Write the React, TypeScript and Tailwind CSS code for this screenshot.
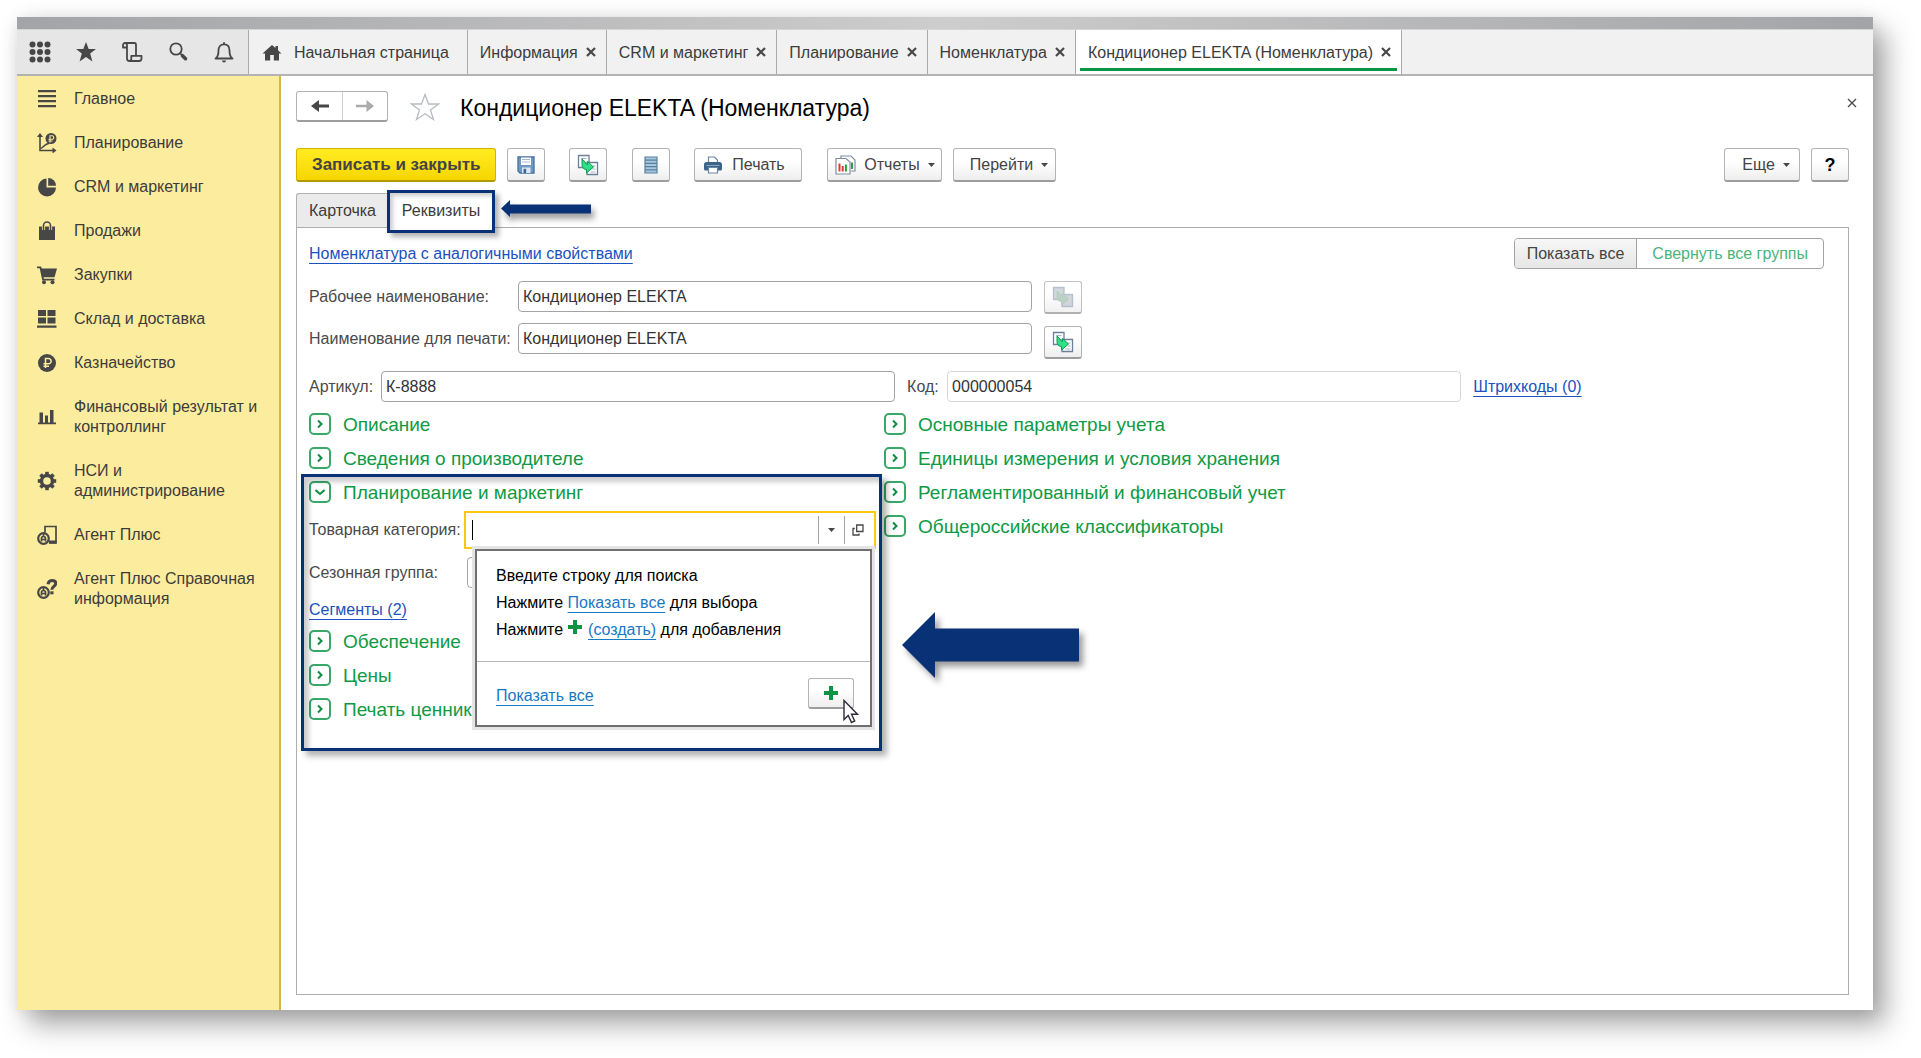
import type { ReactNode } from "react";

const INK = "#474747";

/* ---------- Icons ---------- */

const GridIcon = () => (
  <svg width="22" height="22" viewBox="0 0 22 22" fill={INK}>
    {[3.5, 11, 18.5].map((y) => [3.5, 11, 18.5].map((x) => <circle key={`${x}-${y}`} cx={x} cy={y} r="3" />))}
  </svg>
);

const StarIcon = () => (
  <svg width="22" height="22" viewBox="0 0 22 22" fill={INK}>
    <path d="M11 1l2.700 7H21l-5.800 4.500L17.400 20.500 11 16l-6.400 4.500L6.800 12.500 1 8h7.300z" />
  </svg>
);

const ScrollIcon = () => (
  <svg width="22" height="22" viewBox="0 0 22 22" fill="none" stroke={INK} strokeWidth="1.800" strokeLinejoin="round">
    <path d="M6 6.500H2V4a2 2 0 0 1 2-2h9.500c1.400 0 1.500 1 1.500 2v10.500M4 2c1.500 0 2 .8 2 2v13.500C6 19 7 20 8.500 20H18c1.500 0 2.500-1 2.500-2.500v-2.700H10.300v2.700c0 1.500-.5 2.500-1.800 2.500" />
  </svg>
);

const SearchIcon = () => (
  <svg width="22" height="22" viewBox="0 0 22 22" fill="none" stroke={INK}>
    <circle cx="9" cy="8" r="5.700" strokeWidth="1.800" />
    <path d="M13.300 12.400l1.700 1.700" strokeWidth="1.800" />
    <path d="M15.500 14.700l3 3" strokeWidth="3.500" strokeLinecap="round" />
  </svg>
);

const BellIcon = () => (
  <svg width="22" height="22" viewBox="0 0 22 22" fill="none" stroke={INK} strokeWidth="1.800" strokeLinejoin="round">
    <path d="M2.500 17.500c2.500-1.500 3-3.500 3-8 0-3.700 2-6.200 5.500-6.200s5.500 2.500 5.500 6.200c0 4.500.5 6.500 3 8z" />
    <path d="M11 3.200V1.200" />
    <path d="M9 19.500a2 2 0 0 0 4 0z" fill={INK} stroke="none" />
  </svg>
);

const HomeIcon = () => (
  <svg width="20" height="18" viewBox="0 0 20 18" fill={INK}>
    <path d="M10 1L0.500 9.500H3V16.500H8.200V11h3.600v5.500H17V9.500h2.500L16 6.300V2h-2.500v2.100z" />
  </svg>
);

const CrossIcon = ({ thin = false }: { thin?: boolean }) => (
  <svg width="10" height="10" viewBox="0 0 10 10" stroke={INK} strokeWidth={thin ? 1.3 : 2.2}>
    <path d="M1 1l8 8M9 1L1 9" />
  </svg>
);

const CaretIcon = () => (
  <svg width="7" height="4" viewBox="0 0 7 4" fill={INK}>
    <path d="M0 0h7L3.500 4z" />
  </svg>
);

const Ruble = ({ x, y, color }: { x: number; y: number; color: string }) => (
  <path transform={`translate(${x} ${y})`} d="M-1.500 5V-4.500H1.500a2.600 2.600 0 0 1 0 5.300H-3.500M-3.500 3.200H2" fill="none" stroke={color} strokeWidth="1.500" />
);

const SideSvg = ({ children }: { children: ReactNode }) => (
  <svg width="20" height="20" viewBox="0 0 20 20" fill={INK}>
    {children}
  </svg>
);

const YELLOW = "#fcec9d";

const icons = {
  main: (
    <SideSvg>
      <path d="M1 1h18v2.200H1zM1 6h18v2.200H1zM1 11h18v2.200H1zM1 16h18v2.200H1z" />
    </SideSvg>
  ),
  plan: (
    <SideSvg>
      <path d="M3 3v14.500h13" fill="none" stroke={INK} strokeWidth="1.600" />
      <path d="M3 0L6 4H0zM15.500 14.500V20.500L19.500 17.500z" />
      <path d="M4 15.500l5-4 3-1.200" fill="none" stroke={INK} strokeWidth="1.500" />
      <circle cx="14" cy="5.500" r="5.500" />
      <path d="M13 9.500V2.700h2a1.700 1.700 0 0 1 0 3.600h-3.500M11.500 8h4" fill="none" stroke={YELLOW} strokeWidth="1.100" />
    </SideSvg>
  ),
  crm: (
    <SideSvg>
      <path d="M9.500 1.500V10.500h9.500A9 9 0 1 1 9.500 1.500z" />
      <path d="M11.200 1v7.800H19A8 8 0 0 0 11.200 1z" />
    </SideSvg>
  ),
  sales: (
    <SideSvg>
      <path d="M2 5.500h16v13.500H2z" />
      <path d="M6.500 9V5a3.500 3.500 0 0 1 7 0v4" fill="none" stroke={YELLOW} strokeWidth="3.200" />
      <path d="M6.500 9V4.500a3.500 3.500 0 0 1 7 0V9" fill="none" stroke={INK} strokeWidth="1.600" />
    </SideSvg>
  ),
  purchases: (
    <SideSvg>
      <path d="M0 1.500h4l.8 2H20l-2.500 8.700H6.500l.4 1.600H17.500v1.700H5.300L2.700 3.200H0z" />
      <circle cx="7" cy="17.200" r="2" />
      <circle cx="15.500" cy="17.200" r="2" />
    </SideSvg>
  ),
  stock: (
    <SideSvg>
      <path d="M1 1h8v6H1zM10.500 1h8v6h-8zM1 8.500h8v6H1zM10.500 8.500h8v6h-8zM0 16.500h19.500v2.200H0z" />
    </SideSvg>
  ),
  treasury: (
    <SideSvg>
      <circle cx="10" cy="10" r="9" />
      <Ruble x={10} y={10} color={YELLOW} />
    </SideSvg>
  ),
  finance: (
    <SideSvg>
      <path d="M2.500 5.500h3.500v10H2.500zM8 8.500h3v7H8zM13 3h3.500v12.500H13zM1 15.500h18v1.800H1z" />
    </SideSvg>
  ),
  admin: (
    <SideSvg>
      <circle cx="10" cy="10" r="5.500" fill="none" stroke={INK} strokeWidth="3.400" />
      {[0, 45, 90, 135, 180, 225, 270, 315].map((a) => (
        <path key={a} transform={`rotate(${a} 10 10)`} d="M8.200 .8h3.600v3.700H8.200z" />
      ))}
    </SideSvg>
  ),
  agent: (
    <SideSvg>
      <path d="M8 7.500V1.500h11v16.300h-7" fill="none" stroke={INK} strokeWidth="1.700" />
      <path d="M12 15.500h7.500v3H12z" />
      <circle cx="6.500" cy="13.500" r="5.300" fill={YELLOW} stroke={INK} strokeWidth="2.200" />
      <path d="M4.500 16.500v-3a2 2 0 0 1 4 0v3M4.500 14.500h4M6.500 9v2" fill="none" stroke={INK} strokeWidth="1.700" />
    </SideSvg>
  ),
  agentInfo: (
    <SideSvg>
      <path d="M11 5.200C11.500 2.300 13.300 1.500 15.300 1.500c2 0 3.400 1.200 3.400 3 0 2.700-3.900 3-3.900 6.200" fill="none" stroke={INK} strokeWidth="3" />
      <path d="M13.300 12.300h3.200v3h-3.200z" />
      <circle cx="6.500" cy="13.500" r="5.300" fill={YELLOW} stroke={INK} strokeWidth="2.200" />
      <path d="M4.500 16.500v-3a2 2 0 0 1 4 0v3M4.500 14.500h4M6.500 9v2" fill="none" stroke={INK} strokeWidth="1.700" />
    </SideSvg>
  ),
};

const FloppyIcon = () => (
  <svg width="18" height="18" viewBox="0 0 18 18">
    <path d="M1 1h16v16H3l-2-2z" fill="#6f9ac4" stroke="#44709b" strokeWidth="1.300" />
    <path d="M4 1.500h10v7.500H4z" fill="#fff" />
    <path d="M5 3.500h8M5 6h8" stroke="#a5bdd3" strokeWidth="1.100" />
    <path d="M5 11.500h8.500V17H5z" fill="#dde8f2" />
    <path d="M6.500 12.800h2.700V17H6.500z" fill="#3d6a95" />
  </svg>
);

const TransferIcon = ({ muted = false }: { muted?: boolean }) => (
  <svg width="22" height="22" viewBox="0 0 22 22" className={muted ? "opacity-60" : ""}>
    <path d="M1.500 1.500h10.500v12H1.500z" fill={muted ? "#a3adba" : "#fff"} stroke="#6b7f98" strokeWidth="1.300" />
    <path d="M10 8.500h10.500v12H10z" fill={muted ? "#a3adba" : "#fff"} stroke="#6b7f98" strokeWidth="1.300" />
    <path d="M4 4.500h5.500M15.500 12h3M15.500 15h3M13.500 18h5" stroke="#a7b4c4" />
    <path d="M5 5v5.500c0 3.500 1.800 4.800 4.500 5v3.500l7-6-6-5.500v3c-1.300 0-2-.7-2.300-2.500z" fill={muted ? "#76a48b" : "#2fe089"} stroke={muted ? "#6d9a82" : "#0f9a50"} strokeWidth="1" />
  </svg>
);

const ListIcon = () => (
  <svg width="14" height="18" viewBox="0 0 14 18">
    <path d="M1 1h12v16H1z" fill="#a9c6dc" stroke="#56809f" strokeWidth="1.200" />
    <path d="M1 4.200h12M1 7.400h12M1 10.600h12M1 13.800h12" stroke="#56809f" strokeWidth="1.200" />
  </svg>
);

const PrinterIcon = () => (
  <svg width="18" height="18" viewBox="0 0 18 18">
    <path d="M4.500 7V1h6l3 3v3" fill="#fff" stroke="#6b86a3" strokeWidth="1.200" />
    <path d="M2.500 6h13A2.500 2.500 0 0 1 18 8.500V13a1.500 1.500 0 0 1-1.500 1.500h-15A1.500 1.500 0 0 1 0 13V8.500A2.500 2.500 0 0 1 2.500 6z" fill="#3c6489" />
    <path d="M2.500 9.500h13" stroke="#87a9c6" />
    <path d="M4.500 11.500h9V17h-9z" fill="#fff" stroke="#6b86a3" strokeWidth="1.200" />
  </svg>
);

const ReportIcon = () => (
  <svg width="21" height="20" viewBox="0 0 21 20" fill="none">
    <path d="M6 3V1h10l4 4v11h-4" fill="#fff" stroke="#7f8ea1" strokeWidth="1.200" />
    <path d="M1 3.500h10l4 3.500v12H1z" fill="#fff" stroke="#7f8ea1" strokeWidth="1.200" />
    <path d="M4.500 16.500V8.500" stroke="#e23b2e" strokeWidth="2" />
    <path d="M7.700 16.500V11" stroke="#e23b2e" strokeWidth="2" />
    <path d="M10.900 16.500V9.500M17 7.500V14" stroke="#2f9a45" strokeWidth="2" />
  </svg>
);

const PlusIcon = () => (
  <svg width="14" height="14" viewBox="0 0 14 14" stroke="#0b9444" strokeWidth="4">
    <path d="M7 0v14M0 7h14" />
  </svg>
);

const OpenIcon = () => (
  <svg width="12" height="12" viewBox="0 0 12 12" fill="none" stroke={INK} strokeWidth="1.300">
    <path d="M4.700 1h6.300v6.500H4.700z" />
    <path d="M2.800 4.500H1v6.500h6V9.500" />
  </svg>
);

/* ---------- Building blocks ---------- */

const buttonLook =
  "flex items-center justify-center rounded-[3px] border border-b-2 border-[#b4b4b4] border-b-[#9d9d9d] bg-gradient-to-b from-white from-40% to-[#eeeeee] text-[#444444]";

function ToolButton({ label, className, children }: { label?: string; className: string; children: ReactNode }) {
  return (
    <button type="button" aria-label={label} className={`${buttonLook} h-[34px] ${className}`}>
      {children}
    </button>
  );
}

function Group({ title, open = false }: { title: string; open?: boolean }) {
  return (
    <button type="button" aria-expanded={open} className="flex h-[34px] items-center gap-3 text-left text-[19px] text-[#0f9a45]">
      <span className="flex size-[22px] shrink-0 items-center justify-center rounded-[5px] border-2 border-[#38a869]">
        <svg width="10" height="10" viewBox="0 0 10 10" fill="none" stroke="#0b8f41" strokeWidth="2">
          <path d={open ? "M0.500 3l4.500 4 4.500-4" : "M3 1.500l3.500 3.500-3.500 3.500"} />
        </svg>
      </span>
      <span className="pt-[2px] whitespace-nowrap">{title}</span>
    </button>
  );
}

function Tab({ title, active = false }: { title: string; active?: boolean }) {
  return (
    <div className={`relative flex items-center gap-2 border-r border-[#aaaaaa] pr-[10px] pl-3 ${active ? "bg-white" : "bg-[#f1f1f1]"}`}>
      <button type="button" className="pt-[2px] whitespace-nowrap">
        {title}
      </button>
      <button type="button" aria-label={`Закрыть: ${title}`}>
        <CrossIcon />
      </button>
      {active && <span className="absolute right-1 bottom-[3px] left-1 h-[3px] bg-[#0b9444]" />}
    </div>
  );
}

const sections: { title: string; icon: ReactNode }[] = [
  { title: "Главное", icon: icons.main },
  { title: "Планирование", icon: icons.plan },
  { title: "CRM и маркетинг", icon: icons.crm },
  { title: "Продажи", icon: icons.sales },
  { title: "Закупки", icon: icons.purchases },
  { title: "Склад и доставка", icon: icons.stock },
  { title: "Казначейство", icon: icons.treasury },
  { title: "Финансовый результат и контроллинг", icon: icons.finance },
  { title: "НСИ и администрирование", icon: icons.admin },
  { title: "Агент Плюс", icon: icons.agent },
  { title: "Агент Плюс Справочная информация", icon: icons.agentInfo },
];

const quickActions = [
  { label: "Меню функций", icon: <GridIcon /> },
  { label: "Избранное", icon: <StarIcon /> },
  { label: "История", icon: <ScrollIcon /> },
  { label: "Поиск", icon: <SearchIcon /> },
  { label: "Оповещения", icon: <BellIcon /> },
];

function TopBar() {
  return (
    <header className="flex h-[47px] border-t border-b-2 border-t-[#d5d5d5] border-b-[#b3b3b3] bg-[#f1f1f1] text-[#3c3c3c]">
      <div className="flex border-r border-[#aaaaaa] bg-[#e6e6e6] pr-px">
        {quickActions.map((a) => (
          <button key={a.label} type="button" aria-label={a.label} className="flex w-[46px] items-center justify-center">
            {a.icon}
          </button>
        ))}
      </div>
      <button type="button" className="flex items-center gap-3 border-r border-[#aaaaaa] pt-[2px] pr-[18px] pl-[13px] whitespace-nowrap">
        <HomeIcon />
        Начальная страница
      </button>
      <Tab title="Информация" />
      <Tab title="CRM и маркетинг" />
      <Tab title="Планирование" />
      <Tab title="Номенклатура" />
      <Tab title="Кондиционер ELEKTA (Номенклатура)" active />
    </header>
  );
}

function Sidebar() {
  return (
    <nav className="flex w-[264px] shrink-0 flex-col gap-6 border-r-2 border-[#d2b94b] bg-[#fcec9d] pt-[13px] pr-4 pl-5 text-[#3c3c3c]">
      {sections.map((s) => (
        <a key={s.title} href="#" className="flex items-center gap-[17px] leading-5">
          <span className="shrink-0">{s.icon}</span>
          {s.title}
        </a>
      ))}
    </nav>
  );
}

function TitleRow() {
  return (
    <div className="flex items-center">
      <div className="flex h-[31px] rounded-[3px] border border-b-2 border-[#b4b4b4] border-b-[#9d9d9d]">
        <button type="button" aria-label="Назад" className="flex w-[46px] items-center justify-center border-r border-[#d0d0d0]">
          <svg width="18" height="12" viewBox="0 0 18 12" fill={INK}>
            <path d="M8 0v4.500h10v3H8V12L0 6z" />
          </svg>
        </button>
        <button type="button" aria-label="Вперед" className="flex w-11 items-center justify-center">
          <svg width="18" height="12" viewBox="0 0 18 12" fill="#ababab">
            <path d="M10.500 0v4.800H0v2.400h10.500V12L18 6z" />
          </svg>
        </button>
      </div>
      <button type="button" aria-label="В избранное" className="ml-[22px]">
        <svg width="30" height="28" viewBox="0 0 30 28" fill="none" stroke="#b7bcc2" strokeWidth="1.300">
          <path d="M15 1.500l3.500 9.500H28.500l-8 6 3 9.500L15 20.800 6.500 26.500l3-9.500-8-6H11.500z" />
        </svg>
      </button>
      <h1 className="ml-5 pt-[2px] text-[23px] leading-7 text-black">Кондиционер ELEKTA (Номенклатура)</h1>
      <button type="button" aria-label="Закрыть форму" className="-mr-3 mb-2 ml-auto p-1">
        <CrossIcon thin />
      </button>
    </div>
  );
}

function Toolbar() {
  return (
    <div className="mt-[26px] flex items-center">
      <button
        type="button"
        className="h-[34px] rounded-[3px] border border-b-2 border-[#d1b400] border-b-[#b39a00] bg-gradient-to-b from-[#ffec1f] to-[#f7d600] px-[15px] text-[17px] font-bold whitespace-nowrap text-[#444444]"
      >
        Записать и закрыть
      </button>
      <ToolButton label="Записать" className="ml-[11px] w-[38px]">
        <FloppyIcon />
      </ToolButton>
      <ToolButton label="Создать на основании" className="ml-6 w-[38px]">
        <TransferIcon />
      </ToolButton>
      <ToolButton label="Список" className="ml-[25px] w-[38px]">
        <ListIcon />
      </ToolButton>
      <ToolButton className="ml-6 w-[108px] gap-[10px] pr-2">
        <PrinterIcon />
        Печать
      </ToolButton>
      <ToolButton className="ml-[25px] w-[115px] gap-2">
        <ReportIcon />
        Отчеты
        <CaretIcon />
      </ToolButton>
      <ToolButton className="ml-[11px] w-[103px] gap-2 pl-2">
        Перейти
        <CaretIcon />
      </ToolButton>
      <ToolButton className="ml-auto w-[76px] gap-2 pl-2">
        Еще
        <CaretIcon />
      </ToolButton>
      <ToolButton label="Справка" className="ml-[11px] w-[38px]">
        <span className="text-lg font-bold text-black">?</span>
      </ToolButton>
    </div>
  );
}

function PageTabs() {
  return (
    <div role="tablist" className="mt-[11px] flex h-[34px] text-[#3c3c3c]">
      <button type="button" role="tab" aria-selected="false" className="w-[92px] rounded-tl-[3px] border-t border-l border-[#b0b0b0] bg-[#ebebeb]">
        Карточка
      </button>
      <div className="relative z-10 -mb-px flex w-[106px] bg-white">
        <button type="button" role="tab" aria-selected="true" className="flex-1">
          Реквизиты
        </button>
        <span className="pointer-events-none absolute -inset-x-px -top-[3px] -bottom-[5px] border-[3px] border-[#093276] shadow-[4px_4px_5px_rgba(0,0,0,0.3),inset_3px_3px_4px_rgba(0,0,0,0.2)]" />
        <svg width="98" height="30" viewBox="0 0 98 30" className="pointer-events-none absolute top-[3px] left-[112px] drop-shadow-[3px_5px_3px_rgba(0,0,0,0.4)]">
          <path d="M1 12.500L10 4v4.500H91v9H10V21z" fill="#093276" />
        </svg>
      </div>
    </div>
  );
}

const inputLook = "h-[31px] min-w-0 flex-1 rounded-[4px] border border-[#a3a3a3] bg-white px-1 text-[#333333] outline-none";

function LookupPopup() {
  return (
    <div className="absolute top-full right-[2px] left-[9px] z-20 mt-[2px] border-2 border-[#707070] bg-white text-black shadow-[0_0_0_3px_#e4e4e4]">
      <div className="border-b border-[#b8b8b8] px-[19px] pt-[11px] pb-[18px] leading-[27px] whitespace-nowrap">
        <p>Введите строку для поиска</p>
        <p>
          Нажмите{" "}
          <a href="#" className="text-[#1778c4] underline underline-offset-4">
            Показать все
          </a>{" "}
          для выбора
        </p>
        <p>
          Нажмите{" "}
          <span className="mr-[2px] inline-block align-[1px]">
            <PlusIcon />
          </span>{" "}
          <a href="#" className="text-[#1778c4] underline underline-offset-4">
            (создать)
          </a>{" "}
          для добавления
        </p>
      </div>
      <div className="flex h-[63px] items-center justify-between pr-4 pl-[19px]">
        <a href="#" className="mt-1 text-[#1778c4] underline underline-offset-4">
          Показать все
        </a>
        <button type="button" aria-label="Создать" className={`${buttonLook} relative h-[31px] w-[46px]`}>
          <PlusIcon />
          <svg width="17" height="25" viewBox="0 0 17 25" className="absolute top-5 left-[34px]" fill="#fff" stroke="#2c2c3a" strokeWidth="1.400">
            <path d="M1 1.500V20.500l4.200-4 3.300 7 3.200-1.500-3.200-6.800h6z" />
          </svg>
        </button>
      </div>
    </div>
  );
}

function PlanningSection() {
  return (
    <section className="relative flex flex-col">
      <Group title="Планирование и маркетинг" open />
      <div className="mt-[2px] flex items-center">
        <label htmlFor="category" className="w-[155px] shrink-0 whitespace-nowrap">
          Товарная категория:
        </label>
        <div className="relative mr-2 flex h-[38px] flex-1 border-2 border-[#fcc70f] bg-white">
          <span className="flex min-w-0 flex-1 items-center pl-[6px]">
            <span className="h-5 w-px bg-black" />
            <input id="category" className="h-full min-w-0 flex-1 outline-none" />
          </span>
          <button type="button" aria-label="Выбрать из списка" className="my-[3px] flex w-[26px] items-center justify-center border-l border-[#a3a3a3]">
            <CaretIcon />
          </button>
          <button type="button" aria-label="Открыть" className="my-[3px] flex w-[30px] items-center justify-center border-l border-[#a3a3a3] pr-1">
            <OpenIcon />
          </button>
          <LookupPopup />
        </div>
      </div>
      <div className="mt-2 mr-3 flex items-center">
        <label htmlFor="season" className="w-[158px] shrink-0">
          Сезонная группа:
        </label>
        <input id="season" className={inputLook} />
      </div>
      <a href="#" className="mt-[10px] self-start leading-6 text-[#1c51c0] underline underline-offset-4">
        Сегменты (2)
      </a>
      <div className="mt-[2px] flex flex-col">
        <Group title="Обеспечение" />
        <Group title="Цены" />
        <Group title="Печать ценников" />
      </div>
      <span className="pointer-events-none absolute -top-px right-[2px] -bottom-[25px] -left-2 z-10 border-[3px] border-[#093276] shadow-[5px_5px_6px_rgba(0,0,0,0.3),inset_5px_5px_5px_rgba(0,0,0,0.2)]" />
      <svg width="190" height="80" viewBox="0 0 190 80" className="pointer-events-none absolute top-[136px] left-full ml-[17px] drop-shadow-[4px_5px_3px_rgba(0,0,0,0.4)]">
        <path d="M1 34L34 1v16.500H178v33H34V67z" fill="#093276" />
      </svg>
    </section>
  );
}

function DetailsPanel() {
  return (
    <section className="flex flex-1 flex-col border border-[#aeaeae] pt-[10px] pr-6 pb-6 pl-3 text-[#4a4a4a]">
      <div className="flex items-center justify-between">
        <a href="#" className="text-[#1c51c0] underline underline-offset-4">
          Номенклатура с аналогичными свойствами
        </a>
        <div className="flex h-[31px] rounded-[4px] border border-[#a3a3a3]">
          <button type="button" className="rounded-l-[3px] border-r border-[#a3a3a3] bg-gradient-to-b from-[#f7f7f7] to-[#e6e6e6] px-3 text-[#444444]">
            Показать все
          </button>
          <button type="button" className="px-[15px] text-[#4bb57a]">
            Свернуть все группы
          </button>
        </div>
      </div>

      <div className="mt-3 flex h-[31px] w-[51%] items-start">
        <label htmlFor="work-name" className="w-[209px] shrink-0 leading-[31px]">
          Рабочее наименование:
        </label>
        <input id="work-name" className={inputLook} defaultValue="Кондиционер ELEKTA" />
        <button type="button" disabled aria-label="Заполнить рабочее наименование" className={`${buttonLook} ml-3 h-[33px] w-[38px] opacity-80`}>
          <TransferIcon muted />
        </button>
      </div>
      <div className="mt-[11px] flex h-[31px] w-[51%] items-start">
        <label htmlFor="print-name" className="w-[209px] shrink-0 leading-[31px]">
          Наименование для печати:
        </label>
        <input id="print-name" className={inputLook} defaultValue="Кондиционер ELEKTA" />
        <button type="button" aria-label="Заполнить наименование для печати" className={`${buttonLook} mt-[3px] ml-3 h-[33px] w-[38px]`}>
          <TransferIcon />
        </button>
      </div>

      <div className="mt-[17px] flex w-[84%] items-center">
        <label htmlFor="article" className="w-[72px] shrink-0">
          Артикул:
        </label>
        <input id="article" className={inputLook} defaultValue="К-8888" />
        <label htmlFor="code" className="ml-3 w-10 shrink-0">
          Код:
        </label>
        <input id="code" readOnly className="h-[31px] min-w-0 flex-1 rounded-[4px] border border-[#d6d6d6] bg-white px-1 text-[#333333] outline-none" defaultValue="000000054" />
        <a href="#" className="ml-3 whitespace-nowrap text-[#1c51c0] underline underline-offset-4">
          Штрихкоды (0)
        </a>
      </div>

      <div className="mt-[5px] grid grid-cols-[575fr_940fr]">
        <div className="flex flex-col">
          <Group title="Описание" />
          <Group title="Сведения о производителе" />
          <PlanningSection />
        </div>
        <div className="flex flex-col">
          <Group title="Основные параметры учета" />
          <Group title="Единицы измерения и условия хранения" />
          <Group title="Регламентированный и финансовый учет" />
          <Group title="Общероссийские классификаторы" />
        </div>
      </div>
    </section>
  );
}

export default function App() {
  return (
    <div className="flex min-h-screen flex-col bg-white pt-[17px] pr-12 pb-12 pl-[17px] font-['Liberation_Sans',Arial,sans-serif] text-base">
      <div className="flex flex-1 flex-col bg-white shadow-[12px_14px_26px_rgba(0,0,0,0.36),0_0_16px_rgba(0,0,0,0.08)]">
        <div className="h-3 bg-gradient-to-r from-[#a3a4a7] via-[#cdcdcd] to-[#a3a4a7]" />
        <TopBar />
        <div className="flex flex-1">
          <Sidebar />
          <main className="flex min-w-0 flex-1 flex-col pt-[15px] pr-6 pb-[15px] pl-[15px]">
            <TitleRow />
            <Toolbar />
            <PageTabs />
            <DetailsPanel />
          </main>
        </div>
      </div>
    </div>
  );
}
